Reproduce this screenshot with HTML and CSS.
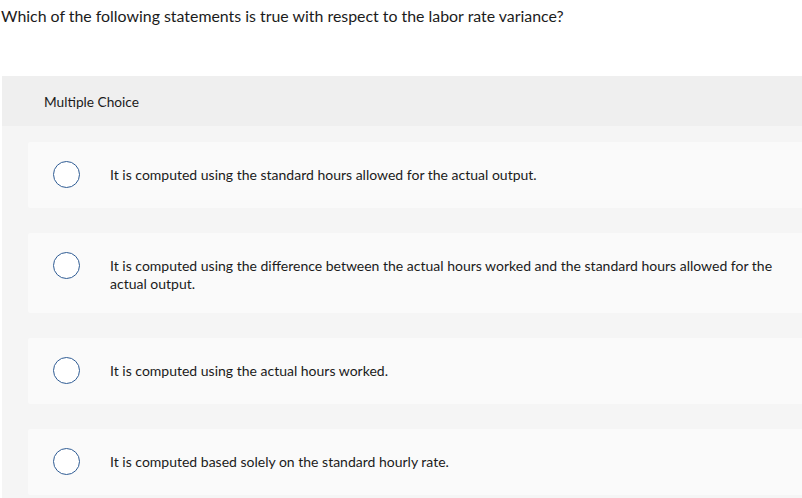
FILE: index.html
```html
<!DOCTYPE html>
<html lang="en">
<head>
<meta charset="utf-8">
<title>Multiple Choice</title>
<link rel="stylesheet" href="styles.css">
</head>
<body>
<div class="page">
  <p class="question">Which of the following statements is true with respect to the labor rate variance?</p>
  <section class="panel">
    <header class="panel-head">Multiple Choice</header>
    <div class="choices">
      <label class="choice">
        <span class="radio"></span>
        <span class="choice-text">It is computed using the standard hours allowed for the actual output.</span>
      </label>
      <label class="choice">
        <span class="radio"></span>
        <span class="choice-text">It is computed using the difference between the actual hours worked and the standard hours allowed for the actual output.</span>
      </label>
      <label class="choice">
        <span class="radio"></span>
        <span class="choice-text">It is computed using the actual hours worked.</span>
      </label>
      <label class="choice">
        <span class="radio"></span>
        <span class="choice-text">It is computed based solely on the standard hourly rate.</span>
      </label>
    </div>
  </section>
</div>
</body>
</html>
```
FILE: styles.css
```css
html, body {
  margin: 0;
  padding: 0;
  background: #ffffff;
  overflow: hidden;
}
body {
  font-family: Lato, "Liberation Sans", sans-serif;
  color: #1b1b1b;
}
.page {
  width: 802px;
}
.question {
  margin: 0;
  padding: 6px 0 0 1px;
  font-size: 15.9px;
  line-height: 20px;
  height: 70px;
}
.panel {
  margin-left: 2px;
  width: 820px;
  background: #f5f5f5;
}
.panel-head {
  height: 50px;
  display: flex;
  align-items: center;
  padding-left: 42px;
  background: #efefef;
  font-size: 13.7px;
}
.choices {
  display: flex;
  flex-direction: column;
  gap: 25px;
  padding: 16px 0 4px 26px;
}
.choice {
  display: flex;
  align-items: flex-start;
  background: #fafafa;
  padding: 19px 0 20px 25px;
  border-radius: 2px;
}
.radio {
  flex: none;
  width: 25px;
  height: 25px;
  border: 1.5px solid #2f5c94;
  border-radius: 50%;
  background: #ffffff;
}
.choice-text {
  margin: 5px 0 0 30px;
  font-size: 14px;
  line-height: 18px;
  max-width: 680px;
}
```
